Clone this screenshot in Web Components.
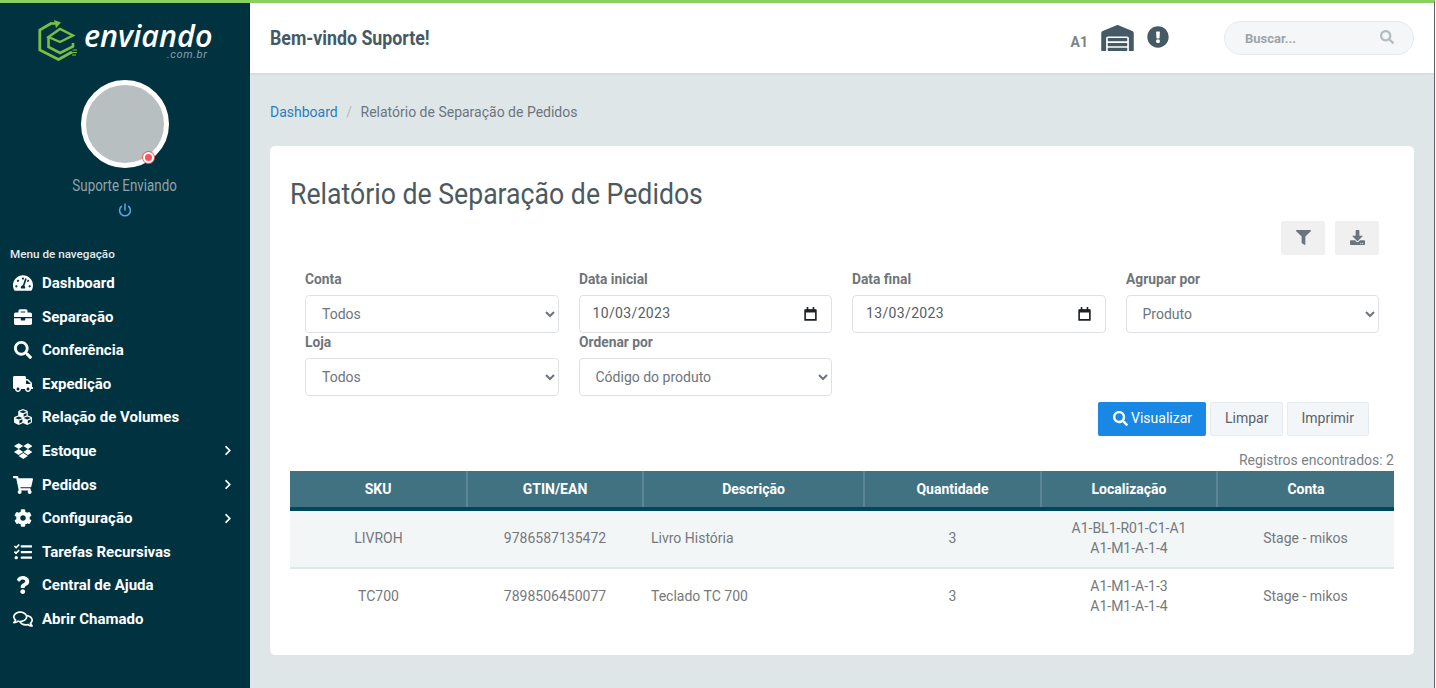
<!DOCTYPE html>
<html lang="pt-BR">
<head>
<meta charset="utf-8">
<title>Relatório de Separação de Pedidos</title>
<style>
  html, body { margin: 0; height: 100%; overflow: hidden; }
  body { font-family: Roboto, "Liberation Sans", sans-serif; font-size: 14px; color: #6c757d; background: #fff; }
</style>
</head>
<body>
<app-shell>
  <side-nav slot="side">
    <nav-item icon="gauge">Dashboard</nav-item>
    <nav-item icon="case">Separação</nav-item>
    <nav-item icon="search">Conferência</nav-item>
    <nav-item icon="truck">Expedição</nav-item>
    <nav-item icon="cubes">Relação de Volumes</nav-item>
    <nav-item icon="dropbox" arrow>Estoque</nav-item>
    <nav-item icon="cart" arrow>Pedidos</nav-item>
    <nav-item icon="cog" arrow>Configuração</nav-item>
    <nav-item icon="tasks">Tarefas Recursivas</nav-item>
    <nav-item icon="question">Central de Ajuda</nav-item>
    <nav-item icon="comments">Abrir Chamado</nav-item>
  </side-nav>
  <top-bar slot="top"></top-bar>
  <bread-crumb></bread-crumb>
  <report-card heading="Relatório de Separação de Pedidos">
    <filter-form></filter-form>
    <report-table></report-table>
  </report-card>
</app-shell>

<script>
// icon paths, shared by all the elements
const ICONS = {
  gauge: ['0 0 576 512', 'M288 32C128.94 32 0 160.94 0 320c0 52.8 14.25 102.26 39.06 144.8 5.61 9.62 16.3 15.2 27.44 15.2h443c11.14 0 21.83-5.58 27.44-15.2C561.75 422.26 576 372.8 576 320c0-159.06-128.94-288-288-288zm0 64c14.71 0 26.58 10.13 30.32 23.65-1.11 2.26-2.64 4.23-3.45 6.67l-9.22 27.67c-5.13 3.49-10.97 6.01-17.64 6.01-17.67 0-32-14.33-32-32S270.33 96 288 96zM96 384c-17.67 0-32-14.33-32-32s14.33-32 32-32 32 14.33 32 32-14.33 32-32 32zm48-160c-17.67 0-32-14.33-32-32s14.33-32 32-32 32 14.33 32 32-14.33 32-32 32zm246.77-72.41l-61.33 184C343.13 347.33 352 364.54 352 384c0 11.72-3.38 22.55-8.88 32H232.88c-5.5-9.45-8.88-20.28-8.88-32 0-33.94 26.5-61.43 59.9-63.59l61.34-184.01c4.17-12.56 17.73-19.45 30.36-15.17 12.57 4.19 19.35 17.79 15.17 30.36zm14.66 57.2l15.52-46.55c3.47-1.29 7.13-2.23 11.05-2.23 17.67 0 32 14.33 32 32s-14.33 32-32 32c-11.38-.01-20.89-6.27-26.57-15.22zM480 384c-17.67 0-32-14.33-32-32s14.33-32 32-32 32 14.33 32 32-14.33 32-32 32z'],
  case: ['0 0 512 512', 'M320 336c0 8.84-7.16 16-16 16h-96c-8.84 0-16-7.16-16-16v-48H0v144c0 25.6 22.4 48 48 48h416c25.6 0 48-22.4 48-48V288H320v48zm144-208h-80V80c0-25.6-22.4-48-48-48H176c-25.6 0-48 22.4-48 48v48H48c-25.6 0-48 22.4-48 48v80h512v-80c0-25.6-22.4-48-48-48zm-144 0H192V96h128v32z'],
  search: ['0 0 512 512', 'M505 442.7L405.3 343c-4.5-4.5-10.6-7-17-7H372c27.6-35.3 44-79.7 44-128C416 93.1 322.9 0 208 0S0 93.1 0 208s93.1 208 208 208c48.3 0 92.7-16.4 128-44v16.3c0 6.4 2.5 12.5 7 17l99.7 99.7c9.4 9.4 24.6 9.4 33.9 0l28.3-28.3c9.4-9.4 9.4-24.6.1-34zM208 336c-70.7 0-128-57.2-128-128 0-70.7 57.2-128 128-128 70.7 0 128 57.2 128 128 0 70.7-57.2 128-128 128z'],
  truck: ['0 0 640 512', 'M624 352h-16V243.9c0-12.7-5.1-24.9-14.1-33.9L494 110.1c-9-9-21.2-14.1-33.9-14.1H416V48c0-26.5-21.5-48-48-48H48C21.5 0 0 21.5 0 48v320c0 26.5 21.5 48 48 48h16c0 53 43 96 96 96s96-43 96-96h128c0 53 43 96 96 96s96-43 96-96h48c8.8 0 16-7.2 16-16v-32c0-8.8-7.2-16-16-16zM160 464c-26.5 0-48-21.5-48-48s21.5-48 48-48 48 21.5 48 48-21.5 48-48 48zm320 0c-26.5 0-48-21.5-48-48s21.5-48 48-48 48 21.5 48 48-21.5 48-48 48zm80-208H416V144h44.1l99.9 99.9V256z'],
  cubes: ['0 0 512 512', 'M488.6 250.2L392 214V105.5c0-15-9.3-28.4-23.4-33.7l-100-37.5c-8.1-3.1-17.1-3.1-25.3 0l-100 37.5c-14.1 5.3-23.4 18.7-23.4 33.7V214l-96.6 36.2C9.3 255.5 0 268.9 0 283.9V394c0 13.6 7.7 26.1 19.9 32.2l100 50c10.1 5.1 22.1 5.1 32.2 0l103.9-52 103.9 52c10.1 5.1 22.1 5.1 32.2 0l100-50c12.2-6.1 19.9-18.6 19.9-32.2V283.9c0-15-9.3-28.4-23.4-33.7zM358 214.8l-85 31.9v-68.2l85-37v73.3zM154 104.1l102-38.2 102 38.2v.6l-102 41.4-102-41.4v-.6zm84 291.1l-85 42.5v-79.1l85-38.8v75.4zm0-112l-102 41.4-102-41.4v-.6l102-38.2 102 38.2v.6zm240 112l-85 42.5v-79.1l85-38.8v75.4zm0-112l-102 41.4-102-41.4v-.6l102-38.2 102 38.2v.6z'],
  dropbox: ['0 0 528 512', 'M264.4 116.3l-132 84.3 132 84.3-132 84.3L0 284.1l132.3-84.3L0 116.3 132.3 32l132.1 84.3zM131.6 395.7l132-84.3 132 84.3-132 84.3-132-84.3zm132.8-111.6l132-84.3-132-83.6L395.7 32 528 116.3l-132.3 84.3L528 284.8l-132.3 84.3-131.3-85z'],
  cart: ['0 0 576 512', 'M528.12 301.319l47.273-208C578.806 78.301 567.391 64 551.99 64H159.208l-9.166-44.81C147.758 8.021 137.93 0 126.529 0H24C10.745 0 0 10.745 0 24v16c0 13.255 10.745 24 24 24h69.883l70.248 343.435C147.325 417.1 136 435.222 136 456c0 30.928 25.072 56 56 56s56-25.072 56-56c0-15.674-6.447-29.835-16.824-40h209.647C430.447 426.165 424 440.326 424 456c0 30.928 25.072 56 56 56s56-25.072 56-56c0-22.172-12.888-41.332-31.579-50.405l5.517-24.276c3.413-15.018-8.002-29.319-23.403-29.319H218.117l-6.545-32h293.145c11.206 0 20.92-7.754 23.403-18.681z'],
  cog: ['0 0 512 512', 'M487.4 315.7l-42.6-24.6c4.3-23.2 4.3-47 0-70.2l42.6-24.6c4.9-2.8 7.1-8.6 5.5-14-11.1-35.6-30-67.8-54.7-94.6-3.8-4.1-10-5.1-14.8-2.3L380.8 110c-17.9-15.4-38.5-27.3-60.8-35.1V25.8c0-5.6-3.9-10.5-9.4-11.7-36.7-8.2-74.3-7.8-109.2 0-5.5 1.2-9.4 6.1-9.4 11.7V75c-22.2 7.9-42.8 19.8-60.8 35.1L88.7 85.5c-4.9-2.8-11-1.9-14.8 2.3-24.7 26.7-43.6 58.9-54.7 94.6-1.7 5.4.6 11.2 5.5 14L67.3 221c-4.3 23.2-4.3 47 0 70.2l-42.6 24.6c-4.9 2.8-7.1 8.6-5.5 14 11.1 35.6 30 67.8 54.7 94.6 3.8 4.1 10 5.1 14.8 2.3l42.6-24.6c17.9 15.4 38.5 27.3 60.8 35.1v49.2c0 5.6 3.9 10.5 9.4 11.7 36.7 8.2 74.3 7.8 109.2 0 5.5-1.2 9.4-6.1 9.4-11.7v-49.2c22.2-7.9 42.8-19.8 60.8-35.1l42.6 24.6c4.9 2.8 11 1.9 14.8-2.3 24.7-26.7 43.6-58.9 54.7-94.6 1.5-5.5-.7-11.3-5.6-14.1zM256 336c-44.1 0-80-35.9-80-80s35.9-80 80-80 80 35.9 80 80-35.9 80-80 80z'],
  tasks: ['0 0 512 512', 'M139.61 35.5a12 12 0 0 0-17 0L58.93 98.81l-22.7-22.12a12 12 0 0 0-17 0L3.53 92.41a12 12 0 0 0 0 17l47.59 47.4a12.78 12.78 0 0 0 17.61 0l15.59-15.62L156.52 69a12.09 12.09 0 0 0 .09-17zm0 159.19a12 12 0 0 0-17 0l-63.68 63.72-22.7-22.1a12 12 0 0 0-17 0L3.53 252a12 12 0 0 0 0 17L51 316.5a12.77 12.77 0 0 0 17.6 0l15.7-15.69 72.2-72.22a12 12 0 0 0 .09-16.9zM64 368c-26.49 0-48.59 21.5-48.59 48S37.53 464 64 464a48 48 0 0 0 0-96zm432 16H208a16 16 0 0 0-16 16v32a16 16 0 0 0 16 16h288a16 16 0 0 0 16-16v-32a16 16 0 0 0-16-16zm0-320H208a16 16 0 0 0-16 16v32a16 16 0 0 0 16 16h288a16 16 0 0 0 16-16V80a16 16 0 0 0-16-16zm0 160H208a16 16 0 0 0-16 16v32a16 16 0 0 0 16 16h288a16 16 0 0 0 16-16v-32a16 16 0 0 0-16-16z'],
  question: ['0 0 384 512', 'M202.021 0C122.202 0 70.503 32.703 29.914 91.026c-7.363 10.58-5.093 25.086 5.178 32.874l43.138 32.709c10.373 7.865 25.132 6.026 33.253-4.148 25.049-31.381 43.63-49.449 82.757-49.449 30.764 0 68.816 19.799 68.816 49.631 0 22.552-18.617 34.134-48.993 51.164-35.423 19.86-82.299 44.576-82.299 106.405V320c0 13.255 10.745 24 24 24h72.471c13.255 0 24-10.745 24-24v-5.773c0-42.86 125.268-44.645 125.268-160.627C377.504 66.256 286.902 0 202.021 0zM192 373.459c-38.196 0-69.271 31.075-69.271 69.271 0 38.195 31.075 69.27 69.271 69.27s69.271-31.075 69.271-69.271-31.075-69.27-69.271-69.27z'],
  comments: ['0 0 576 512', 'M532 386.2c27.5-27.1 44-61.1 44-98.2 0-80-76.5-146.1-176.2-157.9C368.3 72.5 294.3 32 208 32 93.1 32 0 103.6 0 192c0 37 16.5 71 44 98.2-15.3 30.7-37.3 54.5-37.7 54.9-6.3 6.7-8.1 16.5-4.4 25 3.6 8.5 12 14 21.2 14 53.5 0 96.7-20.2 125.2-38.8 9.2 2.1 18.7 3.7 28.4 4.9C208.1 407.6 281.8 448 368 448c20.8 0 40.8-2.4 59.8-6.8C456.3 459.7 499.4 480 553 480c9.2 0 17.5-5.5 21.2-14 3.6-8.5 1.9-18.3-4.4-25-.4-.3-22.5-24.1-37.8-54.8zm-392.8-92.3L122.1 305c-14.1 9.1-28.5 16.3-43.1 21.4 2.7-4.7 5.4-9.7 8-14.8l15.5-31.1L77.7 256C64.2 242.6 48 220.7 48 192c0-60.7 73.3-112 160-112s160 51.3 160 112-73.3 112-160 112c-16.5 0-33-1.9-49-5.6l-19.8-4.5zM498.3 352l-24.7 24.4 15.5 31.1c2.6 5.1 5.3 10.1 8 14.8-14.6-5.1-29-12.3-43.1-21.4l-17.1-11.1-19.9 4.6c-16 3.7-32.5 5.6-49 5.6-54 0-102.2-20.1-131.3-49.7C338 339.5 416 272.9 416 192c0-3.4-.4-6.7-.7-10C479.7 196.5 528 238.8 528 288c0 28.7-16.2 50.6-29.7 64z'],
  chevron: ['0 0 320 512', 'M285.476 272.971L91.132 467.314c-9.373 9.373-24.569 9.373-33.941 0l-22.667-22.667c-9.357-9.357-9.375-24.522-.04-33.901L188.505 256 34.484 101.255c-9.335-9.379-9.317-24.544.04-33.901l22.667-22.667c9.373-9.373 24.569-9.373 33.941 0L285.475 239.03c9.373 9.372 9.373 24.568.001 33.941z'],
  filter: ['0 0 512 512', 'M487.976 0H24.028C2.71 0-8.047 25.866 7.058 40.971L192 225.941V432c0 7.831 3.821 15.17 10.237 19.662l80 55.98C298.02 518.69 320 507.493 320 487.98V225.941l184.947-184.97C520.021 25.896 509.338 0 487.976 0z'],
  download: ['0 0 512 512', 'M216 0h80c13.3 0 24 10.7 24 24v168h87.7c17.8 0 26.7 21.5 14.1 34.1L269.7 378.3c-7.5 7.5-19.8 7.5-27.3 0L90.1 226.1c-12.6-12.6-3.7-34.1 14.1-34.1H192V24c0-13.3 10.7-24 24-24zm296 376v112c0 13.3-10.7 24-24 24H24c-13.3 0-24-10.7-24-24V376c0-13.3 10.7-24 24-24h146.7l49 49c20.1 20.1 52.5 20.1 72.6 0l49-49H488c13.3 0 24 10.7 24 24zm-124 88c0-11-9-20-20-20s-20 9-20 20 9 20 20 20 20-9 20-20zm64 0c0-11-9-20-20-20s-20 9-20 20 9 20 20 20 20-9 20-20z'],
  warehouse: ['0 0 640 512', 'M504 352H136.4c-4.4 0-8 3.6-8 8l-.1 48c0 4.4 3.6 8 8 8H504c4.4 0 8-3.6 8-8v-48c0-4.4-3.6-8-8-8zm0 96H136.1c-4.4 0-8 3.6-8 8l-.1 48c0 4.4 3.6 8 8 8h368c4.4 0 8-3.6 8-8v-48c0-4.4-3.6-8-8-8zm0-192H136.6c-4.4 0-8 3.6-8 8l-.1 48c0 4.4 3.6 8 8 8H504c4.4 0 8-3.6 8-8v-48c0-4.4-3.6-8-8-8zm106.5-139L338.4 3.7a48.15 48.15 0 0 0-36.9 0L29.5 117C11.7 124.5 0 141.9 0 161.3V504c0 4.4 3.6 8 8 8h80c4.4 0 8-3.6 8-8V256c0-17.6 14.6-32 32.6-32h382.8c18 0 32.6 14.4 32.6 32v248c0 4.4 3.6 8 8 8h80c4.4 0 8-3.6 8-8V161.3c0-19.4-11.7-36.8-29.5-44.3z'],
  alert: ['0 0 512 512', 'M504 256c0 136.997-111.043 248-248 248S8 392.997 8 256C8 119.083 119.043 8 256 8s248 111.083 248 248zm-248 50c-25.405 0-46 20.595-46 46s20.595 46 46 46 46-20.595 46-46-20.595-46-46-46zm-43.673-165.346l7.418 136c.347 6.364 5.609 11.346 11.982 11.346h48.546c6.373 0 11.635-4.982 11.982-11.346l7.418-136c.375-6.874-5.098-12.654-11.982-12.654h-63.383c-6.884 0-12.356 5.78-11.981 12.654z']
};

function icon(name, style) {
  const [box, d] = ICONS[name];
  return `<svg viewBox="${box}" style="${style || ''}" aria-hidden="true"><path fill="currentColor" d="${d}"/></svg>`;
}

class AppShell extends HTMLElement {
  constructor() {
    super();
    this.attachShadow({ mode: 'open' });
    this.shadowRoot.innerHTML = `
      <style>
        :host { display: grid; grid-template-columns: 250px 1fr; grid-template-rows: 70px 1fr; width: 1434px; height: 685px; border-top: 3px solid #8ad05f; border-right: 1px solid #5f6468; background: #dfe6e8; }
        .side { grid-row: 1 / 3; }
        main { padding: 28px 20px 0 20px; min-width: 0; }
      </style>
      <div class="side"><slot name="side"></slot></div>
      <slot name="top"></slot>
      <main><slot></slot></main>`;
  }
}

class SideNav extends HTMLElement {
  constructor() {
    super();
    this.attachShadow({ mode: 'open' });
    this.shadowRoot.innerHTML = `
      <style>
        :host { display: flex; flex-direction: column; height: 100%; background: #013240; }
        .brand { display: flex; align-items: flex-start; padding: 17px 0 0 38px; height: 60px; }
        .brand svg { width: 40px; height: 41px; }
        .word { margin-left: 6px; display: flex; flex-direction: column; align-items: flex-end; }
        .word b { color: #fff; font: italic 600 30.5px/26px "Open Sans", Roboto, sans-serif; height: 26px; margin-top: 2px; }
        .word small { font: italic 400 11px/11px Roboto, sans-serif; color: #8b9ea6; letter-spacing: .6px; margin: 1px 5px 0 0; }
        .who { display: flex; flex-direction: column; align-items: center; }
        .avatar { position: relative; width: 78px; height: 78px; border: 5px solid #fff; border-radius: 50%; background: #b8bfc0; }
        .dot { position: absolute; right: 10.5px; bottom: .5px; width: 7px; height: 7px; border-radius: 50%; background: #f8545c; border: 2px solid #fff; box-shadow: 0 0 0 1px #f8545c; box-sizing: content-box; }
        .name { margin-top: 9px; color: #8fa3ab; font-size: 16px; line-height: 18px; transform: scaleX(.835); white-space: nowrap; }
        .off { width: 16px; height: 16px; margin-top: 7px; color: #5aa9e6; }
        h6 { margin: 28px 0 0; padding-left: 10px; font: 500 11.7px/16px Roboto, sans-serif; color: #e4eaec; }
        nav { display: flex; flex-direction: column; margin-top: 4.2px; }
      </style>
      <div class="brand">
        <svg viewBox="0 0 40 41" fill="none" stroke="#76c044" stroke-width="2.8" stroke-linejoin="miter">
          <path d="M13 3.5 L1.8 10 V30 L20.5 39.5 L34 32"/>
          <path d="M12 3.5 H17" stroke-width="2.6"/>
          <path d="M16 0 L23 2.5 L18 8 Z" fill="#76c044" stroke="none"/>
          <path d="M10.5 17 V27 L22 33 L35 26.5 V23" stroke-width="2.6"/>
          <path d="M10.5 17 L22 9 L35 15.5 L22 22 Z" stroke-width="2.4"/>
          <path d="M34 32.5 H39 M34.5 30 H39 M34 35 H38" stroke-width="1.1"/>
        </svg>
        <div class="word"><b>enviando</b><small>.com.br</small></div>
      </div>
      <div class="who">
        <div class="avatar"><span class="dot"></span></div>
        <div class="name">Suporte Enviando</div>
        <svg class="off" viewBox="0 0 16 16" fill="none" stroke="currentColor" stroke-width="1.5" stroke-linecap="round"><path d="M8 2v6"/><path d="M4.4 4.4a5.4 5.4 0 1 0 7.2 0"/></svg>
      </div>
      <h6>Menu de navegação</h6>
      <nav><slot></slot></nav>`;
  }
}

class NavItem extends HTMLElement {
  constructor() {
    super();
    this.attachShadow({ mode: 'open' });
  }
  connectedCallback() {
    const arrow = this.hasAttribute('arrow')
      ? `<span class="arrow">${icon('chevron', 'width:8px;height:11px')}</span>` : '';
    this.shadowRoot.innerHTML = `
      <style>
        :host { display: flex; align-items: center; height: 33.6px; padding: 0 18px 0 13px; color: #fff; font: 700 15px/20px Roboto, sans-serif; }
        .ico { width: 20px; height: 18px; margin-right: 9px; display: flex; align-items: center; justify-content: center; }
        .ico svg { max-width: 20px; height: 18px; }
        .label { flex: 1; white-space: nowrap; }
        .arrow { display: flex; }
      </style>
      <span class="ico">${icon(this.getAttribute('icon'))}</span>
      <span class="label"><slot></slot></span>${arrow}`;
  }
}

class TopBar extends HTMLElement {
  constructor() {
    super();
    this.attachShadow({ mode: 'open' });
    this.shadowRoot.innerHTML = `
      <style>
        :host { display: flex; align-items: center; background: #fff; padding: 0 20px; box-shadow: 0 1px 2px rgba(0,0,0,.08); position: relative; }
        h1 { margin: 0; flex: 1; font: 700 20px/24px Roboto, sans-serif; color: #455a64; transform: scaleX(.888); transform-origin: left; white-space: nowrap; }
        .wh { font-weight: 700; font-size: 14px; color: #7b8488; margin: 8px 13px 0 0; }
        .hd { color: #455a64; display: flex; }
        .search { display: flex; align-items: center; justify-content: space-between; box-sizing: border-box; width: 190px; height: 34px; margin-left: 55px; padding: 0 19px 0 20px; border: 1px solid #e6eaec; border-radius: 17px; background: #f4f6f8; color: #9ca5a9; font-weight: 700; font-size: 13px; }
        .search svg { margin-top: -2px; }
      </style>
      <h1>Bem-vindo Suporte!</h1>
      <span class="wh">A1</span>
      <span class="hd" style="margin-top:-1px">${icon('warehouse', 'width:33px;height:26px')}</span>
      <span class="hd" style="margin:-3px 0 0 13px">${icon('alert', 'width:22px;height:22px')}</span>
      <div class="search"><span>Buscar...</span>${icon('search', 'width:14px;height:14px;color:#b5bcc0')}</div>`;
  }
}

class BreadCrumb extends HTMLElement {
  constructor() {
    super();
    this.attachShadow({ mode: 'open' });
    this.shadowRoot.innerHTML = `
      <style>
        :host { display: flex; gap: 8.5px; height: 45px; line-height: 22px; font-size: 14px; color: #6c757d; }
        a { color: #2b7cbb; text-decoration: none; }
        i { font-style: normal; color: #b4bbc0; }
      </style>
      <a href="#">Dashboard</a><i>/</i><span>Relatório de Separação de Pedidos</span>`;
  }
}

class ReportCard extends HTMLElement {
  constructor() {
    super();
    this.attachShadow({ mode: 'open' });
  }
  connectedCallback() {
    this.shadowRoot.innerHTML = `
      <style>
        :host { display: block; box-sizing: border-box; height: 509px; padding: 28px 20px 0; background: #fff; border-radius: 5px; }
        h2 { margin: 0; font: 400 30px/40px Roboto, sans-serif; color: #4c5a60; transform: scaleX(.888); transform-origin: left; white-space: nowrap; }
      </style>
      <h2>${this.getAttribute('heading')}</h2>
      <slot></slot>`;
  }
}

class FormField extends HTMLElement {
  constructor() {
    super();
    this.attachShadow({ mode: 'open' });
  }
  connectedCallback() {
    const options = this.getAttribute('options');
    const date = this.getAttribute('date');
    const control = options
      ? `<select>${options.split('|').map(o => `<option>${o}</option>`).join('')}</select>`
      : `<div class="date"><span>${date}</span>
           <svg viewBox="0 0 12 13" width="13" height="14"><path fill="none" stroke="#1d2124" stroke-width="1.5" d="M1 3h10v9H1z"/><path fill="#1d2124" d="M1 2h10v3H1zM2.5 0h1.5v3H2.5zM8 0h1.5v3H8z"/></svg>
         </div>`;
    this.shadowRoot.innerHTML = `
      <style>
        :host { display: block; min-width: 0; height: 63px; }
        label { display: block; height: 25px; font-size: 15px; font-weight: 700; line-height: 18px; color: #6f7579; transform: scaleX(.92); transform-origin: left; white-space: nowrap; }
        select, .date { box-sizing: border-box; width: 100%; height: 38px; border: 1px solid #dee2e6; border-radius: 4px; background: #fff; color: #6c757d; font: 400 14px Roboto, sans-serif; }
        select { padding: 0 12px; }
        .date { display: flex; align-items: center; justify-content: space-between; padding: 0 14px 0 13px; color: #565e64; letter-spacing: .35px; }
        .date span { margin-top: -2px; }
      </style>
      <label>${this.getAttribute('label')}</label>
      ${control}`;
  }
}

class ActionButton extends HTMLElement {
  constructor() {
    super();
    this.attachShadow({ mode: 'open' });
  }
  connectedCallback() {
    const name = this.getAttribute('icon');
    this.shadowRoot.innerHTML = `
      <style>
        :host { display: inline-flex; align-items: center; justify-content: center; gap: 3px; height: 34px; box-sizing: border-box; border-radius: 2px; font-size: 14px; padding-bottom: 2px; }
        :host([kind=primary]) { background: #1888e4; color: #fff; }
        :host([kind=light]) { background: #f2f6f9; border: 1px solid #e6ecef; color: #5a6268; }
        :host([kind=tool]) { background: #f0f0f0; color: #6c757d; }
      </style>
      ${name ? icon(name, 'width:15px;height:15px') : ''}<slot></slot>`;
  }
}

class FilterForm extends HTMLElement {
  constructor() {
    super();
    this.attachShadow({ mode: 'open' });
    this.shadowRoot.innerHTML = `
      <style>
        :host { display: block; }
        .tools { display: flex; justify-content: flex-end; gap: 10px; padding: 7px 15px 0; }
        .tools action-button { width: 44px; }
        .grid { display: grid; grid-template-columns: repeat(4, 1fr); column-gap: 20px; padding: 15px 15px 0; }
        .buttons { display: flex; justify-content: flex-end; gap: 4px; padding: 6px 25px 0; }
        .buttons action-button { padding-left: 14px; padding-right: 14px; }
        .buttons action-button[kind=primary] { padding-left: 15px; }
        .buttons action-button:last-child { padding-left: 13px; }
      </style>
      <div class="tools">
        <action-button kind="tool" icon="filter"></action-button>
        <action-button kind="tool" icon="download"></action-button>
      </div>
      <div class="grid">
        <form-field label="Conta" options="Todos"></form-field>
        <form-field label="Data inicial" date="10/03/2023"></form-field>
        <form-field label="Data final" date="13/03/2023"></form-field>
        <form-field label="Agrupar por" options="Produto"></form-field>
        <form-field label="Loja" options="Todos"></form-field>
        <form-field label="Ordenar por" options="Código do produto"></form-field>
      </div>
      <div class="buttons">
        <action-button kind="primary" icon="search">Visualizar</action-button>
        <action-button kind="light">Limpar</action-button>
        <action-button kind="light">Imprimir</action-button>
      </div>`;
  }
}

const COLUMNS = ['SKU', 'GTIN/EAN', 'Descrição', 'Quantidade', 'Localização', 'Conta'];
const ROWS = [
  ['LIVROH', '9786587135472', 'Livro História', '3', ['A1-BL1-R01-C1-A1', 'A1-M1-A-1-4'], 'Stage - mikos'],
  ['TC700', '7898506450077', 'Teclado TC 700', '3', ['A1-M1-A-1-3', 'A1-M1-A-1-4'], 'Stage - mikos']
];

class ReportTable extends HTMLElement {
  constructor() {
    super();
    this.attachShadow({ mode: 'open' });
    const head = COLUMNS.map(c => `<th>${c}</th>`).join('');
    const body = ROWS.map(r => `<tr>${r.map((v, i) =>
      `<td class="${i === 2 ? 'left' : ''}">${Array.isArray(v) ? v.join('<br>') : v}</td>`).join('')}</tr>`).join('');
    this.shadowRoot.innerHTML = `
      <style>
        :host { display: block; }
        p { margin: 14px 0 0; text-align: right; font-size: 14px; line-height: 21px; color: #7b8286; }
        table { width: 100%; table-layout: fixed; border-collapse: collapse; font-size: 14px; margin-top: 0; }
        th { height: 36px; padding: 0; background: #417282; color: #fff; font-weight: 700; border-left: 2px solid #5a8695; border-bottom: 4px solid #00475a; }
        th:first-child { border-left: 0; }
        td { box-sizing: border-box; height: 59px; padding: 0 8px 2px; text-align: center; line-height: 20px; color: #75797c; border-bottom: 2px solid #dfe6e8; }
        td.left { text-align: left; }
        tr:nth-child(odd) td { background: #f2f6f7; }
        tr:last-child td { border-bottom: 0; padding-bottom: 4px; }
      </style>
      <p>Registros encontrados: 2</p>
      <table>
        <colgroup><col style="width:177px"><col style="width:176px"><col style="width:221px"><col style="width:177px"><col style="width:176px"><col style="width:177px"></colgroup>
        <thead><tr>${head}</tr></thead>
        <tbody>${body}</tbody>
      </table>`;
  }
}

customElements.define('app-shell', AppShell);
customElements.define('side-nav', SideNav);
customElements.define('nav-item', NavItem);
customElements.define('top-bar', TopBar);
customElements.define('bread-crumb', BreadCrumb);
customElements.define('report-card', ReportCard);
customElements.define('form-field', FormField);
customElements.define('action-button', ActionButton);
customElements.define('filter-form', FilterForm);
customElements.define('report-table', ReportTable);
</script>
</body>
</html>
